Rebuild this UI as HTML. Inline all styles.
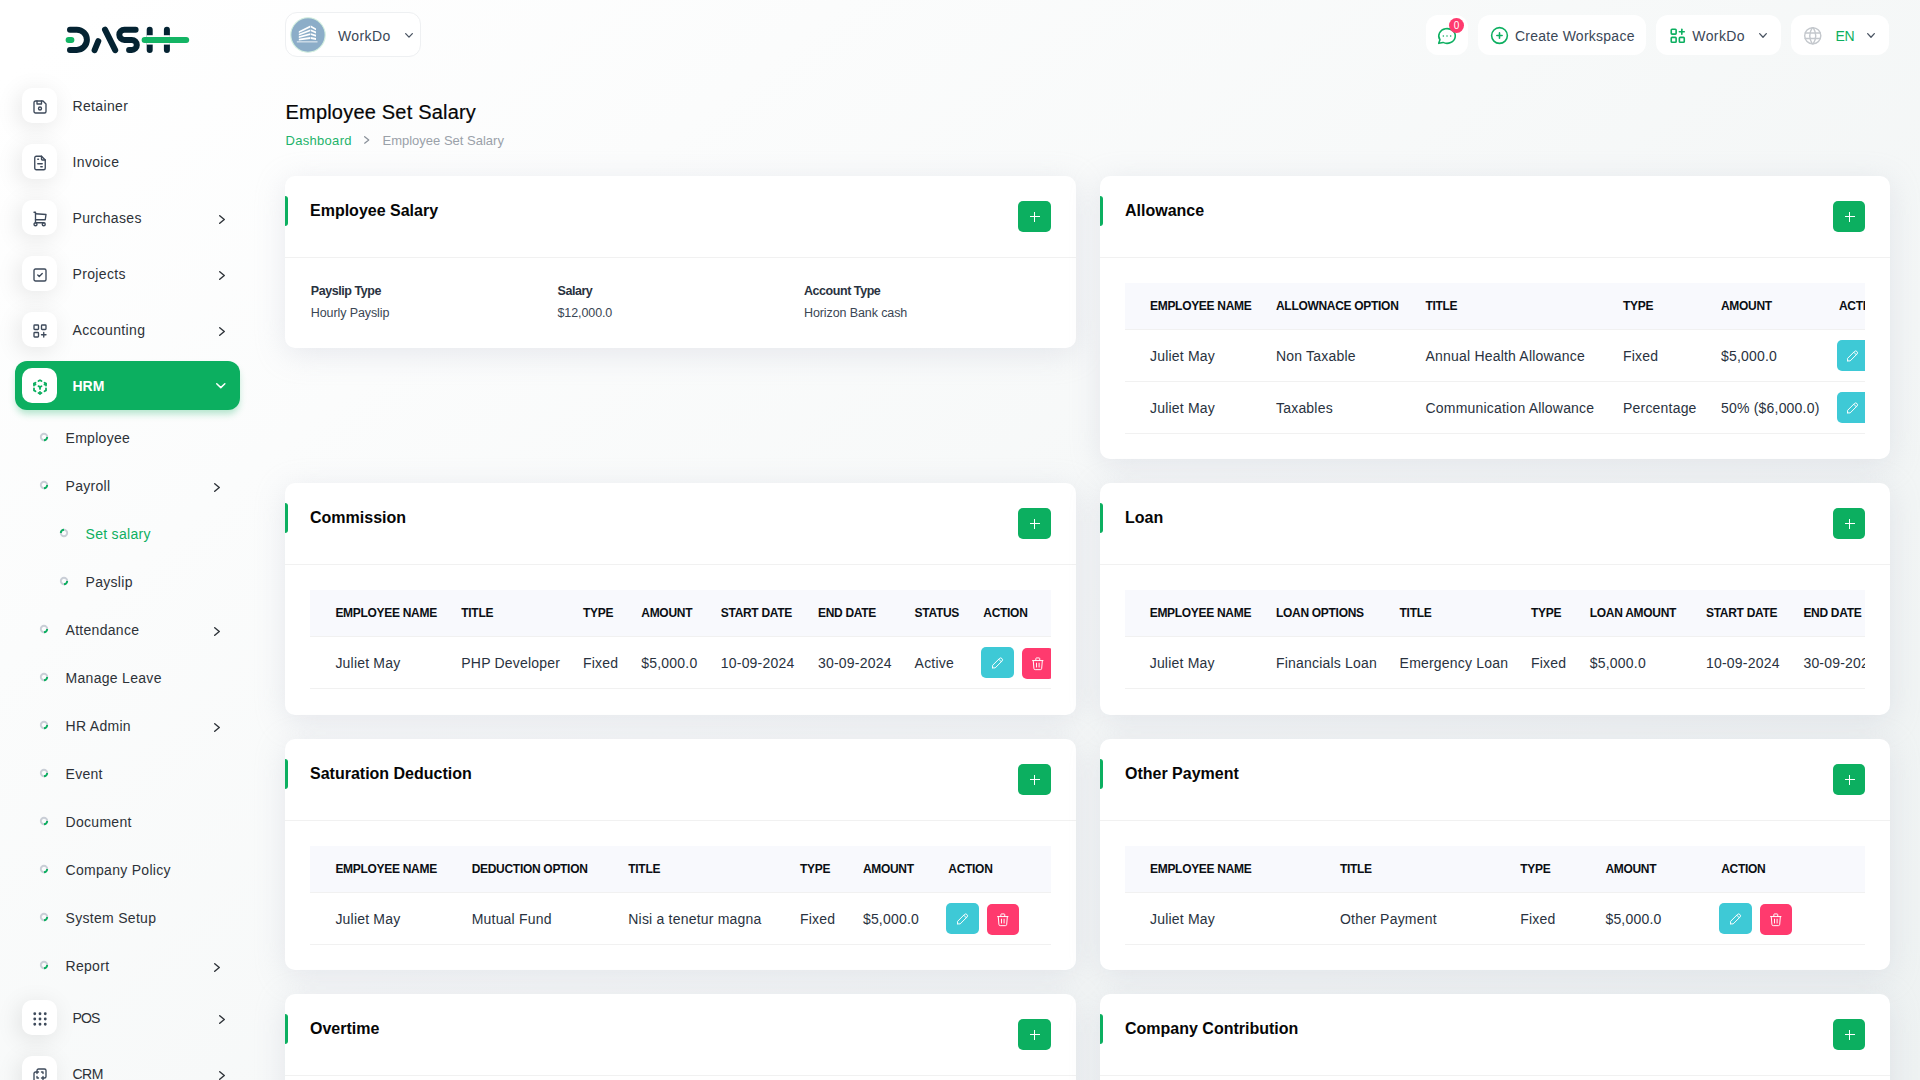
<!DOCTYPE html><html><head><meta charset="utf-8"><title>Employee Set Salary</title><style>
*{margin:0;padding:0;box-sizing:border-box}
html,body{width:1920px;height:1080px;overflow:hidden}
body{position:relative;font-family:"Liberation Sans",sans-serif;color:#293240;
 background:linear-gradient(141.55deg,#ffffff 3%,#eef2f2 100%);}
.t{position:absolute;white-space:nowrap}
.ic{position:absolute;overflow:visible}
.ibox{position:absolute;left:22px;width:35px;height:35px;border-radius:10px;background:#fff;box-shadow:-3px 4px 23px rgba(0,0,0,0.1)}
.ibox.act{box-shadow:none}
.hrm{position:absolute;left:15px;top:361px;width:225px;height:49px;border-radius:12px;background:#0caf60;box-shadow:0 5px 7px -1px rgba(12,175,96,0.3)}
.tb{position:absolute;background:#fff;border-radius:12px}
.card{position:absolute;background:#fff;border-radius:10px;box-shadow:0 6px 30px rgba(182,186,203,0.3)}
.gbar{position:absolute;width:3px;height:30px;background:#0caf60;border-radius:0 3px 3px 0}
.pbtn{position:absolute;width:33px;height:31px;background:#0caf60;border-radius:5px}
.pbtn:before{content:"";position:absolute;left:11.5px;top:15px;width:10px;height:1.2px;background:#fff}
.pbtn:after{content:"";position:absolute;left:16px;top:10.5px;width:1.2px;height:10px;background:#fff}
.hdiv{position:absolute;height:1px;background:#f1f1f1}
.tbl{position:absolute;overflow:hidden}
.thbg{position:absolute;height:46.5px;background:#f8f9fd;border-bottom:1px solid #f1f1f1}
.rdiv{position:absolute;height:1px;background:#f1f1f1}
.bedit{position:absolute;width:33px;height:31px;border-radius:5px;background:#3ec9d6}
.bdel{position:absolute;width:32px;height:31px;border-radius:5px;background:#ff3a6e}
</style></head><body>
<svg class="ic" style="left:60px;top:20px;width:135px;height:40px" viewBox="0 0 135 40" fill="none" stroke-linecap="round" stroke-linejoin="round" stroke-width="6">
<path d="M8.6 19.9H11.4" stroke="#13b464"/>
<path d="M10 9.7H16.8A10.1 10.1 0 0 1 16.8 29.9H10" stroke="#042332"/>
<path d="M34.6 30.2L38.3 21.2" stroke="#042332"/>
<path d="M45 9.6L55.2 30.2" stroke="#042332"/>
<path d="M75.6 9.7H64.4A5.1 5.1 0 0 0 64.4 19.9H71.8A5 5 0 0 1 71.8 29.9H69.1" stroke="#042332"/>
<path d="M89.7 9.7V29.9M106.9 9.7V29.9" stroke="#042332"/>
<path d="M86.7 19.9H109.9" stroke="#fdfdfd" stroke-width="9.4" stroke-linecap="butt"/>
<path d="M84.6 19.9H126.2" stroke="#13b464"/>
</svg>
<div class="ibox" style="top:88px"></div>
<svg class="ic" style="left:30.6px;top:97.7px;width:18px;height:18px;" viewBox="0 0 24 24" fill="none" stroke="#3e4a5b" stroke-width="1.8" stroke-linecap="round" stroke-linejoin="round"><path d="M6 4h10l4 4v10a2 2 0 0 1 -2 2h-12a2 2 0 0 1 -2 -2v-12a2 2 0 0 1 2 -2"/><path d="M10 14a2 2 0 1 0 4 0a2 2 0 1 0 -4 0"/><path d="M14 4l0 4l-6 0l0 -4"/></svg>
<div class="t" style="left:72.50px;top:99.15px;font-size:14px;line-height:14px;color:#2d3238;letter-spacing:0.35px;">Retainer</div>
<div class="ibox" style="top:144px"></div>
<svg class="ic" style="left:30.6px;top:153.7px;width:18px;height:18px;" viewBox="0 0 24 24" fill="none" stroke="#3e4a5b" stroke-width="1.8" stroke-linecap="round" stroke-linejoin="round"><path d="M14 3v4a1 1 0 0 0 1 1h4"/><path d="M17 21h-10a2 2 0 0 1 -2 -2v-14a2 2 0 0 1 2 -2h7l5 5v11a2 2 0 0 1 -2 2z"/><path d="M9 7l1 0"/><path d="M9 13l6 0"/><path d="M13 17l2 0"/></svg>
<div class="t" style="left:72.50px;top:155.15px;font-size:14px;line-height:14px;color:#2d3238;letter-spacing:0.35px;">Invoice</div>
<div class="ibox" style="top:200px"></div>
<svg class="ic" style="left:30.6px;top:209.7px;width:18px;height:18px;" viewBox="0 0 24 24" fill="none" stroke="#3e4a5b" stroke-width="1.8" stroke-linecap="round" stroke-linejoin="round"><path d="M4 19a2 2 0 1 0 4 0a2 2 0 1 0 -4 0"/><path d="M15 19a2 2 0 1 0 4 0a2 2 0 1 0 -4 0"/><path d="M17 17h-11v-14h-2"/><path d="M6 5l14 1l-1 7h-13"/></svg>
<div class="t" style="left:72.50px;top:211.15px;font-size:14px;line-height:14px;color:#2d3238;letter-spacing:0.35px;">Purchases</div>
<svg class="ic" style="left:219px;top:215px;width:6px;height:9px" viewBox="0 0 6 9" fill="none" stroke="#30353b" stroke-width="1.45" stroke-linecap="round" stroke-linejoin="round"><path d="M0.725 0.725L5.275 4.5L0.725 8.275"/></svg>
<div class="ibox" style="top:256px"></div>
<svg class="ic" style="left:30.6px;top:265.7px;width:18px;height:18px;" viewBox="0 0 24 24" fill="none" stroke="#3e4a5b" stroke-width="1.8" stroke-linecap="round" stroke-linejoin="round"><rect x="4" y="4" width="16" height="16" rx="2"/><path d="M9 12l2 2l4 -4"/></svg>
<div class="t" style="left:72.50px;top:267.15px;font-size:14px;line-height:14px;color:#2d3238;letter-spacing:0.35px;">Projects</div>
<svg class="ic" style="left:219px;top:271px;width:6px;height:9px" viewBox="0 0 6 9" fill="none" stroke="#30353b" stroke-width="1.45" stroke-linecap="round" stroke-linejoin="round"><path d="M0.725 0.725L5.275 4.5L0.725 8.275"/></svg>
<div class="ibox" style="top:312px"></div>
<svg class="ic" style="left:30.6px;top:321.7px;width:18px;height:18px;" viewBox="0 0 24 24" fill="none" stroke="#3e4a5b" stroke-width="1.8" stroke-linecap="round" stroke-linejoin="round"><rect x="4" y="4" width="6" height="6" rx="1"/><rect x="14" y="4" width="6" height="6" rx="1"/><rect x="4" y="14" width="6" height="6" rx="1"/><path d="M14 17h6m-3 -3v6"/></svg>
<div class="t" style="left:72.50px;top:323.15px;font-size:14px;line-height:14px;color:#2d3238;letter-spacing:0.35px;">Accounting</div>
<svg class="ic" style="left:219px;top:327px;width:6px;height:9px" viewBox="0 0 6 9" fill="none" stroke="#30353b" stroke-width="1.45" stroke-linecap="round" stroke-linejoin="round"><path d="M0.725 0.725L5.275 4.5L0.725 8.275"/></svg>
<div class="hrm"></div>
<div class="ibox act" style="top:368px"></div>
<svg class="ic" style="left:30.6px;top:377.6px;width:18px;height:18px;" viewBox="0 0 24 24" fill="none" stroke="#0caf60" stroke-width="2.4" stroke-linecap="round" stroke-linejoin="round"><path d="M6 17.6l-2 -1.1v-2.5"/><path d="M4 10v-2.5l2 -1.1"/><path d="M10 4.1l2 -1.1l2 1.1"/><path d="M18 6.4l2 1.1v2.5"/><path d="M20 14v2.5l-2 1.12"/><path d="M14 19.9l-2 1.1l-2 -1.1"/><path d="M12 12l2 -1.1"/><path d="M18 8.6l2 -1.1"/><path d="M12 12l0 2.5"/><path d="M12 18.5l0 2.5"/><path d="M12 12l-2 -1.12"/><path d="M6 8.6l-2 -1.1"/></svg>
<div class="t" style="left:72.50px;top:379.15px;font-size:14px;line-height:14px;color:#ffffff;font-weight:700;">HRM</div>
<svg class="ic" style="left:215.6px;top:382.75px;width:9.6px;height:5.4px" viewBox="0 0 9.6 5.4" fill="none" stroke="#ffffff" stroke-width="1.5" stroke-linecap="round" stroke-linejoin="round"><path d="M0.75 0.75L4.8 4.65L8.85 0.75"/></svg>
<svg class="ic" style="left:39px;top:432px;width:10px;height:10px;transform:rotate(0deg)" viewBox="0 0 10 10" fill="none" stroke-width="1.9"><circle cx="5" cy="5" r="3.2" stroke="#c9ced6"/><path d="M8.2 5A3.2 3.2 0 0 1 5 8.2" stroke="#0caf60"/></svg>
<div class="t" style="left:65.50px;top:431.15px;font-size:14px;line-height:14px;color:#2d3238;letter-spacing:0.3px;">Employee</div>
<svg class="ic" style="left:39px;top:480px;width:10px;height:10px;transform:rotate(0deg)" viewBox="0 0 10 10" fill="none" stroke-width="1.9"><circle cx="5" cy="5" r="3.2" stroke="#c9ced6"/><path d="M8.2 5A3.2 3.2 0 0 1 5 8.2" stroke="#0caf60"/></svg>
<div class="t" style="left:65.50px;top:479.15px;font-size:14px;line-height:14px;color:#2d3238;letter-spacing:0.3px;">Payroll</div>
<svg class="ic" style="left:214px;top:482.5px;width:6px;height:9px" viewBox="0 0 6 9" fill="none" stroke="#30353b" stroke-width="1.45" stroke-linecap="round" stroke-linejoin="round"><path d="M0.725 0.725L5.275 4.5L0.725 8.275"/></svg>
<svg class="ic" style="left:59px;top:528px;width:10px;height:10px;transform:rotate(180deg)" viewBox="0 0 10 10" fill="none" stroke-width="1.9"><circle cx="5" cy="5" r="3.2" stroke="#c9ced6"/><path d="M8.2 5A3.2 3.2 0 0 1 5 8.2" stroke="#0caf60"/></svg>
<div class="t" style="left:85.50px;top:527.15px;font-size:14px;line-height:14px;color:#0caf60;letter-spacing:0.3px;">Set salary</div>
<svg class="ic" style="left:59px;top:576px;width:10px;height:10px;transform:rotate(0deg)" viewBox="0 0 10 10" fill="none" stroke-width="1.9"><circle cx="5" cy="5" r="3.2" stroke="#c9ced6"/><path d="M8.2 5A3.2 3.2 0 0 1 5 8.2" stroke="#0caf60"/></svg>
<div class="t" style="left:85.50px;top:575.15px;font-size:14px;line-height:14px;color:#2d3238;letter-spacing:0.3px;">Payslip</div>
<svg class="ic" style="left:39px;top:624px;width:10px;height:10px;transform:rotate(0deg)" viewBox="0 0 10 10" fill="none" stroke-width="1.9"><circle cx="5" cy="5" r="3.2" stroke="#c9ced6"/><path d="M8.2 5A3.2 3.2 0 0 1 5 8.2" stroke="#0caf60"/></svg>
<div class="t" style="left:65.50px;top:623.15px;font-size:14px;line-height:14px;color:#2d3238;letter-spacing:0.3px;">Attendance</div>
<svg class="ic" style="left:214px;top:626.5px;width:6px;height:9px" viewBox="0 0 6 9" fill="none" stroke="#30353b" stroke-width="1.45" stroke-linecap="round" stroke-linejoin="round"><path d="M0.725 0.725L5.275 4.5L0.725 8.275"/></svg>
<svg class="ic" style="left:39px;top:672px;width:10px;height:10px;transform:rotate(0deg)" viewBox="0 0 10 10" fill="none" stroke-width="1.9"><circle cx="5" cy="5" r="3.2" stroke="#c9ced6"/><path d="M8.2 5A3.2 3.2 0 0 1 5 8.2" stroke="#0caf60"/></svg>
<div class="t" style="left:65.50px;top:671.15px;font-size:14px;line-height:14px;color:#2d3238;letter-spacing:0.3px;">Manage Leave</div>
<svg class="ic" style="left:39px;top:720px;width:10px;height:10px;transform:rotate(0deg)" viewBox="0 0 10 10" fill="none" stroke-width="1.9"><circle cx="5" cy="5" r="3.2" stroke="#c9ced6"/><path d="M8.2 5A3.2 3.2 0 0 1 5 8.2" stroke="#0caf60"/></svg>
<div class="t" style="left:65.50px;top:719.15px;font-size:14px;line-height:14px;color:#2d3238;letter-spacing:0.3px;">HR Admin</div>
<svg class="ic" style="left:214px;top:722.5px;width:6px;height:9px" viewBox="0 0 6 9" fill="none" stroke="#30353b" stroke-width="1.45" stroke-linecap="round" stroke-linejoin="round"><path d="M0.725 0.725L5.275 4.5L0.725 8.275"/></svg>
<svg class="ic" style="left:39px;top:768px;width:10px;height:10px;transform:rotate(0deg)" viewBox="0 0 10 10" fill="none" stroke-width="1.9"><circle cx="5" cy="5" r="3.2" stroke="#c9ced6"/><path d="M8.2 5A3.2 3.2 0 0 1 5 8.2" stroke="#0caf60"/></svg>
<div class="t" style="left:65.50px;top:767.15px;font-size:14px;line-height:14px;color:#2d3238;letter-spacing:0.3px;">Event</div>
<svg class="ic" style="left:39px;top:816px;width:10px;height:10px;transform:rotate(0deg)" viewBox="0 0 10 10" fill="none" stroke-width="1.9"><circle cx="5" cy="5" r="3.2" stroke="#c9ced6"/><path d="M8.2 5A3.2 3.2 0 0 1 5 8.2" stroke="#0caf60"/></svg>
<div class="t" style="left:65.50px;top:815.15px;font-size:14px;line-height:14px;color:#2d3238;letter-spacing:0.3px;">Document</div>
<svg class="ic" style="left:39px;top:864px;width:10px;height:10px;transform:rotate(0deg)" viewBox="0 0 10 10" fill="none" stroke-width="1.9"><circle cx="5" cy="5" r="3.2" stroke="#c9ced6"/><path d="M8.2 5A3.2 3.2 0 0 1 5 8.2" stroke="#0caf60"/></svg>
<div class="t" style="left:65.50px;top:863.15px;font-size:14px;line-height:14px;color:#2d3238;letter-spacing:0.3px;">Company Policy</div>
<svg class="ic" style="left:39px;top:912px;width:10px;height:10px;transform:rotate(0deg)" viewBox="0 0 10 10" fill="none" stroke-width="1.9"><circle cx="5" cy="5" r="3.2" stroke="#c9ced6"/><path d="M8.2 5A3.2 3.2 0 0 1 5 8.2" stroke="#0caf60"/></svg>
<div class="t" style="left:65.50px;top:911.15px;font-size:14px;line-height:14px;color:#2d3238;letter-spacing:0.3px;">System Setup</div>
<svg class="ic" style="left:39px;top:960px;width:10px;height:10px;transform:rotate(0deg)" viewBox="0 0 10 10" fill="none" stroke-width="1.9"><circle cx="5" cy="5" r="3.2" stroke="#c9ced6"/><path d="M8.2 5A3.2 3.2 0 0 1 5 8.2" stroke="#0caf60"/></svg>
<div class="t" style="left:65.50px;top:959.15px;font-size:14px;line-height:14px;color:#2d3238;letter-spacing:0.3px;">Report</div>
<svg class="ic" style="left:214px;top:962.5px;width:6px;height:9px" viewBox="0 0 6 9" fill="none" stroke="#30353b" stroke-width="1.45" stroke-linecap="round" stroke-linejoin="round"><path d="M0.725 0.725L5.275 4.5L0.725 8.275"/></svg>
<div class="ibox" style="top:1000px"></div>
<svg class="ic" style="left:30.6px;top:1009.7px;width:18px;height:18px;" viewBox="0 0 24 24" fill="none" stroke="#3e4a5b" stroke-width="1.8" stroke-linecap="round" stroke-linejoin="round"><circle cx="5" cy="5" r="1"/><circle cx="12" cy="5" r="1"/><circle cx="19" cy="5" r="1"/><circle cx="5" cy="12" r="1"/><circle cx="12" cy="12" r="1"/><circle cx="19" cy="12" r="1"/><circle cx="5" cy="19" r="1"/><circle cx="12" cy="19" r="1"/><circle cx="19" cy="19" r="1"/></svg>
<div class="t" style="left:72.50px;top:1011.15px;font-size:14px;line-height:14px;color:#2d3238;letter-spacing:-0.9px;">POS</div>
<svg class="ic" style="left:219px;top:1015px;width:6px;height:9px" viewBox="0 0 6 9" fill="none" stroke="#30353b" stroke-width="1.45" stroke-linecap="round" stroke-linejoin="round"><path d="M0.725 0.725L5.275 4.5L0.725 8.275"/></svg>
<div class="ibox" style="top:1056px"></div>
<svg class="ic" style="left:30.6px;top:1065.7px;width:18px;height:18px;" viewBox="0 0 24 24" fill="none" stroke="#3e4a5b" stroke-width="1.8" stroke-linecap="round" stroke-linejoin="round"><path d="M16 16v2a2 2 0 0 1 -2 2h-8a2 2 0 0 1 -2 -2v-8a2 2 0 0 1 2 -2h2v-2a2 2 0 0 1 2 -2h8a2 2 0 0 1 2 2v8a2 2 0 0 1 -2 2h-2"/><path d="M10 8l-2 0l0 2"/><path d="M8 14l0 2l2 0"/><path d="M14 8l2 0l0 2"/><path d="M16 14l0 2l-2 0"/></svg>
<div class="t" style="left:72.50px;top:1067.15px;font-size:14px;line-height:14px;color:#2d3238;letter-spacing:-0.5px;">CRM</div>
<svg class="ic" style="left:219px;top:1071px;width:6px;height:9px" viewBox="0 0 6 9" fill="none" stroke="#30353b" stroke-width="1.45" stroke-linecap="round" stroke-linejoin="round"><path d="M0.725 0.725L5.275 4.5L0.725 8.275"/></svg>
<div class="tb" style="left:285px;top:12px;width:136px;height:45px;border:1px solid #eef0f2;box-sizing:border-box"></div>
<svg class="ic" style="left:290px;top:17px;width:36px;height:36px" viewBox="0 0 36 36">
<circle cx="18" cy="18" r="17.2" fill="#8cadc8" stroke="#d3efdf" stroke-width="1.1"/>
<g fill="#ffffff"><path d="M8.8 14.20L20.3 8.60V10.50L8.8 16.10z"/><path d="M8.8 16.70L20.3 12.40V14.30L8.8 18.60z"/><path d="M8.8 19.20L20.3 16.20V18.10L8.8 21.10z"/><path d="M8.8 21.70L20.3 20.00V21.90L8.8 23.60z"/><path d="M20.9 8.60L26 11.40V13.30L20.9 10.50z"/><path d="M20.9 12.40L26 14.60V16.50L20.9 14.30z"/><path d="M20.9 16.20L26 17.80V19.70L20.9 18.10z"/><path d="M20.9 20.00L26 21.00V22.90L20.9 21.90z"/><path d="M6.8 24.3h20.7v1.1h-20.7z" opacity="0.75"/></g></svg>
<div class="t" style="left:338.00px;top:29.15px;font-size:14px;line-height:14px;color:#3a4757;letter-spacing:0.4px;">WorkDo</div>
<svg class="ic" style="left:405px;top:32.7px;width:8px;height:4.8px" viewBox="0 0 8 4.8" fill="none" stroke="#4a5462" stroke-width="1.3" stroke-linecap="round" stroke-linejoin="round"><path d="M0.65 0.65L4.0 4.1499999999999995L7.35 0.65"/></svg>
<div class="tb" style="left:1426px;top:15px;width:42px;height:40px"></div>
<svg class="ic" style="left:1436px;top:25px;width:22px;height:22px;" viewBox="0 0 24 24" fill="none" stroke="#0caf60" stroke-width="1.7" stroke-linecap="round" stroke-linejoin="round"><path d="M3 20l1.3 -3.9a9 8 0 1 1 3.4 2.9l-4.7 1"/><path d="M12 12l0 .01"/><path d="M8 12l0 .01"/><path d="M16 12l0 .01"/></svg>
<div style="position:absolute;left:1449px;top:17.5px;width:15px;height:15px;border-radius:50%;background:#ff3a6e;color:#fff;font-size:10px;line-height:15px;text-align:center">0</div>
<div class="tb" style="left:1478px;top:15px;width:168px;height:40px"></div>
<svg class="ic" style="left:1488.5px;top:24.8px;width:21px;height:21px;" viewBox="0 0 24 24" fill="none" stroke="#0caf60" stroke-width="1.8" stroke-linecap="round" stroke-linejoin="round"><path d="M3 12a9 9 0 1 0 18 0a9 9 0 0 0 -18 0"/><path d="M9 12h6"/><path d="M12 9v6"/></svg>
<div class="t" style="left:1515.00px;top:28.75px;font-size:14px;line-height:14px;color:#3a4757;letter-spacing:0.25px;">Create Workspace</div>
<div class="tb" style="left:1656px;top:15px;width:125px;height:40px"></div>
<svg class="ic" style="left:1667.5px;top:26px;width:19.5px;height:19.5px;" viewBox="0 0 24 24" fill="none" stroke="#0caf60" stroke-width="2" stroke-linecap="round" stroke-linejoin="round"><path d="M4 5a1 1 0 0 1 1 -1h4a1 1 0 0 1 1 1v4a1 1 0 0 1 -1 1h-4a1 1 0 0 1 -1 -1z"/><path d="M4 15a1 1 0 0 1 1 -1h4a1 1 0 0 1 1 1v4a1 1 0 0 1 -1 1h-4a1 1 0 0 1 -1 -1z"/><path d="M14 15a1 1 0 0 1 1 -1h4a1 1 0 0 1 1 1v4a1 1 0 0 1 -1 1h-4a1 1 0 0 1 -1 -1z"/><path d="M14 7l6 0"/><path d="M17 4l0 6"/></svg>
<div class="t" style="left:1692.30px;top:29.15px;font-size:14px;line-height:14px;color:#3a4757;letter-spacing:0.4px;">WorkDo</div>
<svg class="ic" style="left:1759px;top:32.8px;width:8px;height:4.9px" viewBox="0 0 8 4.9" fill="none" stroke="#4a5462" stroke-width="1.3" stroke-linecap="round" stroke-linejoin="round"><path d="M0.65 0.65L4.0 4.25L7.35 0.65"/></svg>
<div class="tb" style="left:1791px;top:15px;width:98px;height:40px"></div>
<svg class="ic" style="left:1801.5px;top:25.3px;width:21.5px;height:21.5px;" viewBox="0 0 24 24" fill="none" stroke="#c4c8cd" stroke-width="1.6" stroke-linecap="round" stroke-linejoin="round"><path d="M3 12a9 9 0 1 0 18 0a9 9 0 0 0 -18 0"/><path d="M3.6 9h16.8"/><path d="M3.6 15h16.8"/><path d="M11.5 3a17 17 0 0 0 0 18"/><path d="M12.5 3a17 17 0 0 1 0 18"/></svg>
<div class="t" style="left:1835.50px;top:29.15px;font-size:14px;line-height:14px;color:#0caf60;letter-spacing:-0.4px;">EN</div>
<svg class="ic" style="left:1867px;top:32.8px;width:8px;height:4.9px" viewBox="0 0 8 4.9" fill="none" stroke="#4a5462" stroke-width="1.3" stroke-linecap="round" stroke-linejoin="round"><path d="M0.65 0.65L4.0 4.25L7.35 0.65"/></svg>
<div class="t" style="left:285.50px;top:102.07px;font-size:20px;line-height:20px;color:#060606;letter-spacing:0.2px;-webkit-text-stroke:0.2px #060606;">Employee Set Salary</div>
<div class="t" style="left:285.50px;top:133.60px;font-size:13px;line-height:13px;color:#1eb36b;letter-spacing:0.3px;">Dashboard</div>
<svg class="ic" style="left:364px;top:136px;width:5.4px;height:7.8px" viewBox="0 0 5.4 7.8" fill="none" stroke="#8b929b" stroke-width="1.3" stroke-linecap="round" stroke-linejoin="round"><path d="M0.65 0.65L4.75 3.9L0.65 7.1499999999999995"/></svg>
<div class="t" style="left:382.50px;top:133.60px;font-size:13px;line-height:13px;color:#9aa1a9;">Employee Set Salary</div>
<div class="card" style="left:285px;top:176px;width:791px;height:172px"></div>
<div class="gbar" style="left:285px;top:196px"></div>
<div class="t" style="left:310.00px;top:203.16px;font-size:16px;line-height:16px;color:#060606;font-weight:700;">Employee Salary</div>
<div class="pbtn" style="left:1018px;top:201px;width:33px"></div>
<div class="hdiv" style="left:285px;top:257px;width:791px"></div>
<div class="t" style="left:310.80px;top:285.42px;font-size:12.5px;line-height:12.5px;color:#293240;font-weight:700;letter-spacing:-0.45px;">Payslip Type</div>
<div class="t" style="left:310.80px;top:307.42px;font-size:12.5px;line-height:12.5px;color:#3a4654;letter-spacing:-0.1px;">Hourly Payslip</div>
<div class="t" style="left:557.50px;top:285.42px;font-size:12.5px;line-height:12.5px;color:#293240;font-weight:700;letter-spacing:-0.45px;">Salary</div>
<div class="t" style="left:557.50px;top:307.42px;font-size:12.5px;line-height:12.5px;color:#3a4654;letter-spacing:-0.1px;">$12,000.0</div>
<div class="t" style="left:804.00px;top:285.42px;font-size:12.5px;line-height:12.5px;color:#293240;font-weight:700;letter-spacing:-0.45px;">Account Type</div>
<div class="t" style="left:804.00px;top:307.42px;font-size:12.5px;line-height:12.5px;color:#3a4654;letter-spacing:-0.1px;">Horizon Bank cash</div>
<div class="card" style="left:1100px;top:176px;width:790px;height:283px"></div>
<div class="gbar" style="left:1100px;top:196px"></div>
<div class="t" style="left:1125.00px;top:203.16px;font-size:16px;line-height:16px;color:#060606;font-weight:700;">Allowance</div>
<div class="pbtn" style="left:1833px;top:201px;width:32px"></div>
<div class="hdiv" style="left:1100px;top:257px;width:790px"></div>
<div class="tbl" style="left:1125px;top:283px;width:740px;height:151.5px">
<div class="thbg" style="left:0;top:0;width:740px"></div>
<div class="t" style="left:25.00px;top:16.84px;font-size:12px;line-height:12px;color:#0b0f14;font-weight:700;letter-spacing:-0.3px;">EMPLOYEE NAME</div>
<div class="t" style="left:151.00px;top:16.84px;font-size:12px;line-height:12px;color:#0b0f14;font-weight:700;letter-spacing:-0.3px;">ALLOWNACE OPTION</div>
<div class="t" style="left:300.50px;top:16.84px;font-size:12px;line-height:12px;color:#0b0f14;font-weight:700;letter-spacing:-0.3px;">TITLE</div>
<div class="t" style="left:498.00px;top:16.84px;font-size:12px;line-height:12px;color:#0b0f14;font-weight:700;letter-spacing:-0.3px;">TYPE</div>
<div class="t" style="left:596.00px;top:16.84px;font-size:12px;line-height:12px;color:#0b0f14;font-weight:700;letter-spacing:-0.3px;">AMOUNT</div>
<div class="t" style="left:714.00px;top:16.84px;font-size:12px;line-height:12px;color:#0b0f14;font-weight:700;letter-spacing:-0.3px;">ACTION</div>
<div class="rdiv" style="left:0;top:98px;width:740px"></div>
<div class="t" style="left:25.00px;top:66.15px;font-size:14px;line-height:14px;color:#293240;letter-spacing:0.2px;">Juliet May</div>
<div class="t" style="left:151.00px;top:66.15px;font-size:14px;line-height:14px;color:#293240;letter-spacing:0.2px;">Non Taxable</div>
<div class="t" style="left:300.50px;top:66.15px;font-size:14px;line-height:14px;color:#293240;letter-spacing:0.2px;">Annual Health Allowance</div>
<div class="t" style="left:498.00px;top:66.15px;font-size:14px;line-height:14px;color:#293240;letter-spacing:0.2px;">Fixed</div>
<div class="t" style="left:596.00px;top:66.15px;font-size:14px;line-height:14px;color:#293240;letter-spacing:0.2px;">$5,000.0</div>
<div class="bedit" style="left:711.8px;top:57px"><svg class="ic" style="left:8.7px;top:8.2px;width:15.5px;height:15.5px;" viewBox="0 0 24 24" fill="none" stroke="#fff" stroke-width="1.5" stroke-linecap="round" stroke-linejoin="round"><path d="M4 20h4l10.5 -10.5a2.828 2.828 0 1 0 -4 -4l-10.5 10.5v4"/><path d="M13.5 6.5l4 4"/></svg></div>
<div class="bdel" style="left:753px;top:58px"><svg class="ic" style="left:8.1px;top:7.75px;width:15.6px;height:15.6px;" viewBox="0 0 24 24" fill="none" stroke="#fff" stroke-width="1.5" stroke-linecap="round" stroke-linejoin="round"><path d="M4 7l16 0"/><path d="M10 11l0 6"/><path d="M14 11l0 6"/><path d="M5 7l1 12a2 2 0 0 0 2 2h8a2 2 0 0 0 2 -2l1 -12"/><path d="M9 7v-3a1 1 0 0 1 1 -1h4a1 1 0 0 1 1 1v3"/></svg></div>
<div class="rdiv" style="left:0;top:150px;width:740px"></div>
<div class="t" style="left:25.00px;top:118.15px;font-size:14px;line-height:14px;color:#293240;letter-spacing:0.2px;">Juliet May</div>
<div class="t" style="left:151.00px;top:118.15px;font-size:14px;line-height:14px;color:#293240;letter-spacing:0.2px;">Taxables</div>
<div class="t" style="left:300.50px;top:118.15px;font-size:14px;line-height:14px;color:#293240;letter-spacing:0.2px;">Communication Allowance</div>
<div class="t" style="left:498.00px;top:118.15px;font-size:14px;line-height:14px;color:#293240;letter-spacing:0.2px;">Percentage</div>
<div class="t" style="left:596.00px;top:118.15px;font-size:14px;line-height:14px;color:#293240;letter-spacing:0.2px;">50% ($6,000.0)</div>
<div class="bedit" style="left:711.8px;top:109px"><svg class="ic" style="left:8.7px;top:8.2px;width:15.5px;height:15.5px;" viewBox="0 0 24 24" fill="none" stroke="#fff" stroke-width="1.5" stroke-linecap="round" stroke-linejoin="round"><path d="M4 20h4l10.5 -10.5a2.828 2.828 0 1 0 -4 -4l-10.5 10.5v4"/><path d="M13.5 6.5l4 4"/></svg></div>
<div class="bdel" style="left:753px;top:110px"><svg class="ic" style="left:8.1px;top:7.75px;width:15.6px;height:15.6px;" viewBox="0 0 24 24" fill="none" stroke="#fff" stroke-width="1.5" stroke-linecap="round" stroke-linejoin="round"><path d="M4 7l16 0"/><path d="M10 11l0 6"/><path d="M14 11l0 6"/><path d="M5 7l1 12a2 2 0 0 0 2 2h8a2 2 0 0 0 2 -2l1 -12"/><path d="M9 7v-3a1 1 0 0 1 1 -1h4a1 1 0 0 1 1 1v3"/></svg></div>
</div>
<div class="card" style="left:285px;top:483px;width:791px;height:232px"></div>
<div class="gbar" style="left:285px;top:503px"></div>
<div class="t" style="left:310.00px;top:510.16px;font-size:16px;line-height:16px;color:#060606;font-weight:700;">Commission</div>
<div class="pbtn" style="left:1018px;top:508px;width:33px"></div>
<div class="hdiv" style="left:285px;top:564px;width:791px"></div>
<div class="tbl" style="left:310px;top:590px;width:741px;height:99.5px">
<div class="thbg" style="left:0;top:0;width:741px"></div>
<div class="t" style="left:25.40px;top:16.84px;font-size:12px;line-height:12px;color:#0b0f14;font-weight:700;letter-spacing:-0.3px;">EMPLOYEE NAME</div>
<div class="t" style="left:151.30px;top:16.84px;font-size:12px;line-height:12px;color:#0b0f14;font-weight:700;letter-spacing:-0.3px;">TITLE</div>
<div class="t" style="left:273.00px;top:16.84px;font-size:12px;line-height:12px;color:#0b0f14;font-weight:700;letter-spacing:-0.3px;">TYPE</div>
<div class="t" style="left:331.30px;top:16.84px;font-size:12px;line-height:12px;color:#0b0f14;font-weight:700;letter-spacing:-0.3px;">AMOUNT</div>
<div class="t" style="left:410.80px;top:16.84px;font-size:12px;line-height:12px;color:#0b0f14;font-weight:700;letter-spacing:-0.3px;">START DATE</div>
<div class="t" style="left:508.00px;top:16.84px;font-size:12px;line-height:12px;color:#0b0f14;font-weight:700;letter-spacing:-0.3px;">END DATE</div>
<div class="t" style="left:604.60px;top:16.84px;font-size:12px;line-height:12px;color:#0b0f14;font-weight:700;letter-spacing:-0.3px;">STATUS</div>
<div class="t" style="left:673.30px;top:16.84px;font-size:12px;line-height:12px;color:#0b0f14;font-weight:700;letter-spacing:-0.3px;">ACTION</div>
<div class="rdiv" style="left:0;top:98px;width:741px"></div>
<div class="t" style="left:25.40px;top:66.15px;font-size:14px;line-height:14px;color:#293240;letter-spacing:0.2px;">Juliet May</div>
<div class="t" style="left:151.30px;top:66.15px;font-size:14px;line-height:14px;color:#293240;letter-spacing:0.2px;">PHP Developer</div>
<div class="t" style="left:273.00px;top:66.15px;font-size:14px;line-height:14px;color:#293240;letter-spacing:0.2px;">Fixed</div>
<div class="t" style="left:331.30px;top:66.15px;font-size:14px;line-height:14px;color:#293240;letter-spacing:0.2px;">$5,000.0</div>
<div class="t" style="left:410.80px;top:66.15px;font-size:14px;line-height:14px;color:#293240;letter-spacing:0.2px;">10-09-2024</div>
<div class="t" style="left:508.00px;top:66.15px;font-size:14px;line-height:14px;color:#293240;letter-spacing:0.2px;">30-09-2024</div>
<div class="t" style="left:604.60px;top:66.15px;font-size:14px;line-height:14px;color:#293240;letter-spacing:0.2px;">Active</div>
<div class="bedit" style="left:671.0999999999999px;top:57px"><svg class="ic" style="left:8.7px;top:8.2px;width:15.5px;height:15.5px;" viewBox="0 0 24 24" fill="none" stroke="#fff" stroke-width="1.5" stroke-linecap="round" stroke-linejoin="round"><path d="M4 20h4l10.5 -10.5a2.828 2.828 0 1 0 -4 -4l-10.5 10.5v4"/><path d="M13.5 6.5l4 4"/></svg></div>
<div class="bdel" style="left:712.3px;top:58px"><svg class="ic" style="left:8.1px;top:7.75px;width:15.6px;height:15.6px;" viewBox="0 0 24 24" fill="none" stroke="#fff" stroke-width="1.5" stroke-linecap="round" stroke-linejoin="round"><path d="M4 7l16 0"/><path d="M10 11l0 6"/><path d="M14 11l0 6"/><path d="M5 7l1 12a2 2 0 0 0 2 2h8a2 2 0 0 0 2 -2l1 -12"/><path d="M9 7v-3a1 1 0 0 1 1 -1h4a1 1 0 0 1 1 1v3"/></svg></div>
</div>
<div class="card" style="left:1100px;top:483px;width:790px;height:232px"></div>
<div class="gbar" style="left:1100px;top:503px"></div>
<div class="t" style="left:1125.00px;top:510.16px;font-size:16px;line-height:16px;color:#060606;font-weight:700;">Loan</div>
<div class="pbtn" style="left:1833px;top:508px;width:32px"></div>
<div class="hdiv" style="left:1100px;top:564px;width:790px"></div>
<div class="tbl" style="left:1125px;top:590px;width:740px;height:99.5px">
<div class="thbg" style="left:0;top:0;width:740px"></div>
<div class="t" style="left:24.70px;top:16.84px;font-size:12px;line-height:12px;color:#0b0f14;font-weight:700;letter-spacing:-0.3px;">EMPLOYEE NAME</div>
<div class="t" style="left:151.00px;top:16.84px;font-size:12px;line-height:12px;color:#0b0f14;font-weight:700;letter-spacing:-0.3px;">LOAN OPTIONS</div>
<div class="t" style="left:274.60px;top:16.84px;font-size:12px;line-height:12px;color:#0b0f14;font-weight:700;letter-spacing:-0.3px;">TITLE</div>
<div class="t" style="left:406.00px;top:16.84px;font-size:12px;line-height:12px;color:#0b0f14;font-weight:700;letter-spacing:-0.3px;">TYPE</div>
<div class="t" style="left:464.80px;top:16.84px;font-size:12px;line-height:12px;color:#0b0f14;font-weight:700;letter-spacing:-0.3px;">LOAN AMOUNT</div>
<div class="t" style="left:581.00px;top:16.84px;font-size:12px;line-height:12px;color:#0b0f14;font-weight:700;letter-spacing:-0.3px;">START DATE</div>
<div class="t" style="left:678.40px;top:16.84px;font-size:12px;line-height:12px;color:#0b0f14;font-weight:700;letter-spacing:-0.3px;">END DATE</div>
<div class="rdiv" style="left:0;top:98px;width:740px"></div>
<div class="t" style="left:24.70px;top:66.15px;font-size:14px;line-height:14px;color:#293240;letter-spacing:0.2px;">Juliet May</div>
<div class="t" style="left:151.00px;top:66.15px;font-size:14px;line-height:14px;color:#293240;letter-spacing:0.2px;">Financials Loan</div>
<div class="t" style="left:274.60px;top:66.15px;font-size:14px;line-height:14px;color:#293240;letter-spacing:0.2px;">Emergency Loan</div>
<div class="t" style="left:406.00px;top:66.15px;font-size:14px;line-height:14px;color:#293240;letter-spacing:0.2px;">Fixed</div>
<div class="t" style="left:464.80px;top:66.15px;font-size:14px;line-height:14px;color:#293240;letter-spacing:0.2px;">$5,000.0</div>
<div class="t" style="left:581.00px;top:66.15px;font-size:14px;line-height:14px;color:#293240;letter-spacing:0.2px;">10-09-2024</div>
<div class="t" style="left:678.40px;top:66.15px;font-size:14px;line-height:14px;color:#293240;letter-spacing:0.2px;">30-09-2024</div>
</div>
<div class="card" style="left:285px;top:739px;width:791px;height:231px"></div>
<div class="gbar" style="left:285px;top:759px"></div>
<div class="t" style="left:310.00px;top:766.16px;font-size:16px;line-height:16px;color:#060606;font-weight:700;">Saturation Deduction</div>
<div class="pbtn" style="left:1018px;top:764px;width:33px"></div>
<div class="hdiv" style="left:285px;top:820px;width:791px"></div>
<div class="tbl" style="left:310px;top:846px;width:741px;height:99.5px">
<div class="thbg" style="left:0;top:0;width:741px"></div>
<div class="t" style="left:25.40px;top:16.84px;font-size:12px;line-height:12px;color:#0b0f14;font-weight:700;letter-spacing:-0.3px;">EMPLOYEE NAME</div>
<div class="t" style="left:161.70px;top:16.84px;font-size:12px;line-height:12px;color:#0b0f14;font-weight:700;letter-spacing:-0.3px;">DEDUCTION OPTION</div>
<div class="t" style="left:318.30px;top:16.84px;font-size:12px;line-height:12px;color:#0b0f14;font-weight:700;letter-spacing:-0.3px;">TITLE</div>
<div class="t" style="left:490.00px;top:16.84px;font-size:12px;line-height:12px;color:#0b0f14;font-weight:700;letter-spacing:-0.3px;">TYPE</div>
<div class="t" style="left:552.90px;top:16.84px;font-size:12px;line-height:12px;color:#0b0f14;font-weight:700;letter-spacing:-0.3px;">AMOUNT</div>
<div class="t" style="left:638.30px;top:16.84px;font-size:12px;line-height:12px;color:#0b0f14;font-weight:700;letter-spacing:-0.3px;">ACTION</div>
<div class="rdiv" style="left:0;top:98px;width:741px"></div>
<div class="t" style="left:25.40px;top:66.15px;font-size:14px;line-height:14px;color:#293240;letter-spacing:0.2px;">Juliet May</div>
<div class="t" style="left:161.70px;top:66.15px;font-size:14px;line-height:14px;color:#293240;letter-spacing:0.2px;">Mutual Fund</div>
<div class="t" style="left:318.30px;top:66.15px;font-size:14px;line-height:14px;color:#293240;letter-spacing:0.2px;">Nisi a tenetur magna</div>
<div class="t" style="left:490.00px;top:66.15px;font-size:14px;line-height:14px;color:#293240;letter-spacing:0.2px;">Fixed</div>
<div class="t" style="left:552.90px;top:66.15px;font-size:14px;line-height:14px;color:#293240;letter-spacing:0.2px;">$5,000.0</div>
<div class="bedit" style="left:636.0999999999999px;top:57px"><svg class="ic" style="left:8.7px;top:8.2px;width:15.5px;height:15.5px;" viewBox="0 0 24 24" fill="none" stroke="#fff" stroke-width="1.5" stroke-linecap="round" stroke-linejoin="round"><path d="M4 20h4l10.5 -10.5a2.828 2.828 0 1 0 -4 -4l-10.5 10.5v4"/><path d="M13.5 6.5l4 4"/></svg></div>
<div class="bdel" style="left:677.3px;top:58px"><svg class="ic" style="left:8.1px;top:7.75px;width:15.6px;height:15.6px;" viewBox="0 0 24 24" fill="none" stroke="#fff" stroke-width="1.5" stroke-linecap="round" stroke-linejoin="round"><path d="M4 7l16 0"/><path d="M10 11l0 6"/><path d="M14 11l0 6"/><path d="M5 7l1 12a2 2 0 0 0 2 2h8a2 2 0 0 0 2 -2l1 -12"/><path d="M9 7v-3a1 1 0 0 1 1 -1h4a1 1 0 0 1 1 1v3"/></svg></div>
</div>
<div class="card" style="left:1100px;top:739px;width:790px;height:231px"></div>
<div class="gbar" style="left:1100px;top:759px"></div>
<div class="t" style="left:1125.00px;top:766.16px;font-size:16px;line-height:16px;color:#060606;font-weight:700;">Other Payment</div>
<div class="pbtn" style="left:1833px;top:764px;width:32px"></div>
<div class="hdiv" style="left:1100px;top:820px;width:790px"></div>
<div class="tbl" style="left:1125px;top:846px;width:740px;height:99.5px">
<div class="thbg" style="left:0;top:0;width:740px"></div>
<div class="t" style="left:25.00px;top:16.84px;font-size:12px;line-height:12px;color:#0b0f14;font-weight:700;letter-spacing:-0.3px;">EMPLOYEE NAME</div>
<div class="t" style="left:215.00px;top:16.84px;font-size:12px;line-height:12px;color:#0b0f14;font-weight:700;letter-spacing:-0.3px;">TITLE</div>
<div class="t" style="left:395.20px;top:16.84px;font-size:12px;line-height:12px;color:#0b0f14;font-weight:700;letter-spacing:-0.3px;">TYPE</div>
<div class="t" style="left:480.40px;top:16.84px;font-size:12px;line-height:12px;color:#0b0f14;font-weight:700;letter-spacing:-0.3px;">AMOUNT</div>
<div class="t" style="left:596.20px;top:16.84px;font-size:12px;line-height:12px;color:#0b0f14;font-weight:700;letter-spacing:-0.3px;">ACTION</div>
<div class="rdiv" style="left:0;top:98px;width:740px"></div>
<div class="t" style="left:25.00px;top:66.15px;font-size:14px;line-height:14px;color:#293240;letter-spacing:0.2px;">Juliet May</div>
<div class="t" style="left:215.00px;top:66.15px;font-size:14px;line-height:14px;color:#293240;letter-spacing:0.2px;">Other Payment</div>
<div class="t" style="left:395.20px;top:66.15px;font-size:14px;line-height:14px;color:#293240;letter-spacing:0.2px;">Fixed</div>
<div class="t" style="left:480.40px;top:66.15px;font-size:14px;line-height:14px;color:#293240;letter-spacing:0.2px;">$5,000.0</div>
<div class="bedit" style="left:594.0px;top:57px"><svg class="ic" style="left:8.7px;top:8.2px;width:15.5px;height:15.5px;" viewBox="0 0 24 24" fill="none" stroke="#fff" stroke-width="1.5" stroke-linecap="round" stroke-linejoin="round"><path d="M4 20h4l10.5 -10.5a2.828 2.828 0 1 0 -4 -4l-10.5 10.5v4"/><path d="M13.5 6.5l4 4"/></svg></div>
<div class="bdel" style="left:635.2px;top:58px"><svg class="ic" style="left:8.1px;top:7.75px;width:15.6px;height:15.6px;" viewBox="0 0 24 24" fill="none" stroke="#fff" stroke-width="1.5" stroke-linecap="round" stroke-linejoin="round"><path d="M4 7l16 0"/><path d="M10 11l0 6"/><path d="M14 11l0 6"/><path d="M5 7l1 12a2 2 0 0 0 2 2h8a2 2 0 0 0 2 -2l1 -12"/><path d="M9 7v-3a1 1 0 0 1 1 -1h4a1 1 0 0 1 1 1v3"/></svg></div>
</div>
<div class="card" style="left:285px;top:994px;width:791px;height:200px"></div>
<div class="gbar" style="left:285px;top:1014px"></div>
<div class="t" style="left:310.00px;top:1021.16px;font-size:16px;line-height:16px;color:#060606;font-weight:700;">Overtime</div>
<div class="pbtn" style="left:1018px;top:1019px;width:33px"></div>
<div class="hdiv" style="left:285px;top:1075px;width:791px"></div>
<div class="card" style="left:1100px;top:994px;width:790px;height:200px"></div>
<div class="gbar" style="left:1100px;top:1014px"></div>
<div class="t" style="left:1125.00px;top:1021.16px;font-size:16px;line-height:16px;color:#060606;font-weight:700;">Company Contribution</div>
<div class="pbtn" style="left:1833px;top:1019px;width:32px"></div>
<div class="hdiv" style="left:1100px;top:1075px;width:790px"></div>
</body></html>
